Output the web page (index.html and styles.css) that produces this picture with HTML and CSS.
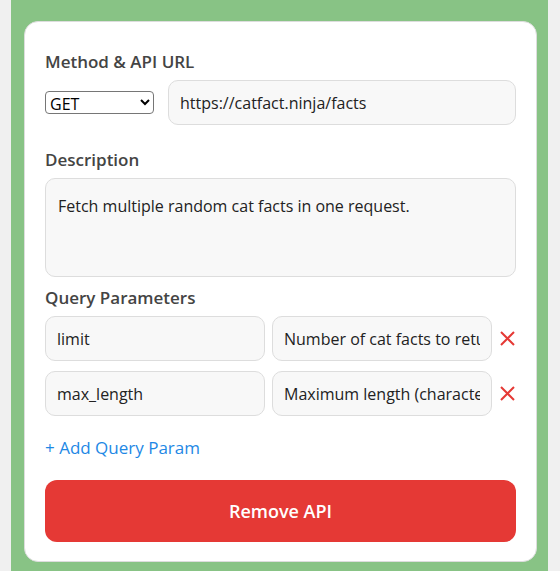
FILE: index.html
```html
<!DOCTYPE html>
<html lang="en">
<head>
  <meta charset="UTF-8">
  <title>API Editor</title>
  <meta name="viewport" content="width=device-width, initial-scale=1.0">
  <link rel="stylesheet" href="styles.css">
</head>
<body>
  <div class="panel">
    <div class="api-card">
      <label class="field-label">Method &amp; API URL</label>
      <div class="url-row">
        <select class="method-select">
          <option>GET</option>
          <option>POST</option>
          <option>PUT</option>
          <option>DELETE</option>
        </select>
        <input type="text" class="text-input url-input" value="https://catfact.ninja/facts">
      </div>

      <label class="field-label">Description</label>
      <textarea class="text-input desc-input">Fetch multiple random cat facts in one request.</textarea>

      <label class="field-label">Query Parameters</label>
      <div class="param-list">
        <div class="param-row">
          <input type="text" class="text-input" value="limit">
          <input type="text" class="text-input" value="Number of cat facts to return">
          <button class="remove-param" title="Remove">
            <svg width="17" height="17" viewBox="0 0 17 17"><path d="M2 2L15 15M15 2L2 15" stroke="#e53935" stroke-width="2" fill="none"/></svg>
          </button>
        </div>
        <div class="param-row">
          <input type="text" class="text-input" value="max_length">
          <input type="text" class="text-input" value="Maximum length (characters) of each fact">
          <button class="remove-param" title="Remove">
            <svg width="17" height="17" viewBox="0 0 17 17"><path d="M2 2L15 15M15 2L2 15" stroke="#e53935" stroke-width="2" fill="none"/></svg>
          </button>
        </div>
      </div>

      <a href="#" class="add-param">+ Add Query Param</a>

      <button class="remove-api">Remove API</button>
    </div>
  </div>
</body>
</html>
```

FILE: styles.css
```css
* { box-sizing: border-box; }

body {
  margin: 0;
  background: #f0f0f0;
  font-family: 'Open Sans', 'Noto Sans', sans-serif;
  color: #222;
}

.panel {
  margin-left: 11px;
  width: 537px;
  background: #88c385;
  padding: 21px 11px 10px 13px;
}

.api-card {
  background: #fff;
  border: 1px solid #ddd;
  border-radius: 14px;
  padding: 29px 20px 19px;
}

.field-label {
  display: block;
  font-size: 17px;
  font-weight: 600;
  color: #444;
  line-height: 22px;
  margin-bottom: 7px;
}

.url-row {
  display: flex;
  align-items: center;
  gap: 14px;
  margin-bottom: 24px;
}

.method-select {
  width: 109px;
  height: 23px;
  font-family: inherit;
  font-size: 16px;
  color: #000;
  background: #fff;
  border: 1px solid #767676;
  border-radius: 4px;
}

.text-input {
  font-family: inherit;
  font-size: 16px;
  color: #222;
  background: #f8f8f8;
  border: 1px solid #ddd;
  border-radius: 10px;
  padding: 0 11px;
  height: 45px;
  outline: none;
  min-width: 0;
}

.url-input { flex: 1; }

.desc-input {
  display: block;
  width: 100%;
  height: 99px;
  padding: 16px 12px;
  resize: none;
  margin-bottom: 10px;
  line-height: 22px;
}

.param-list {
  display: flex;
  flex-direction: column;
  gap: 10px;
}

.param-row {
  display: flex;
  align-items: center;
  gap: 7px;
}

.param-row .text-input { flex: 1; }

.remove-param {
  border: none;
  background: none;
  padding: 0;
  width: 17px;
  height: 17px;
  cursor: pointer;
}

.add-param {
  display: inline-block;
  margin-top: 20px;
  font-size: 17px;
  color: #1e88e5;
  text-decoration: none;
}

.remove-api {
  display: block;
  width: 100%;
  height: 62px;
  margin-top: 21px;
  border: none;
  border-radius: 12px;
  background: #e53935;
  color: #fff;
  font-family: inherit;
  font-size: 18px;
  font-weight: 600;
  cursor: pointer;
}
```
